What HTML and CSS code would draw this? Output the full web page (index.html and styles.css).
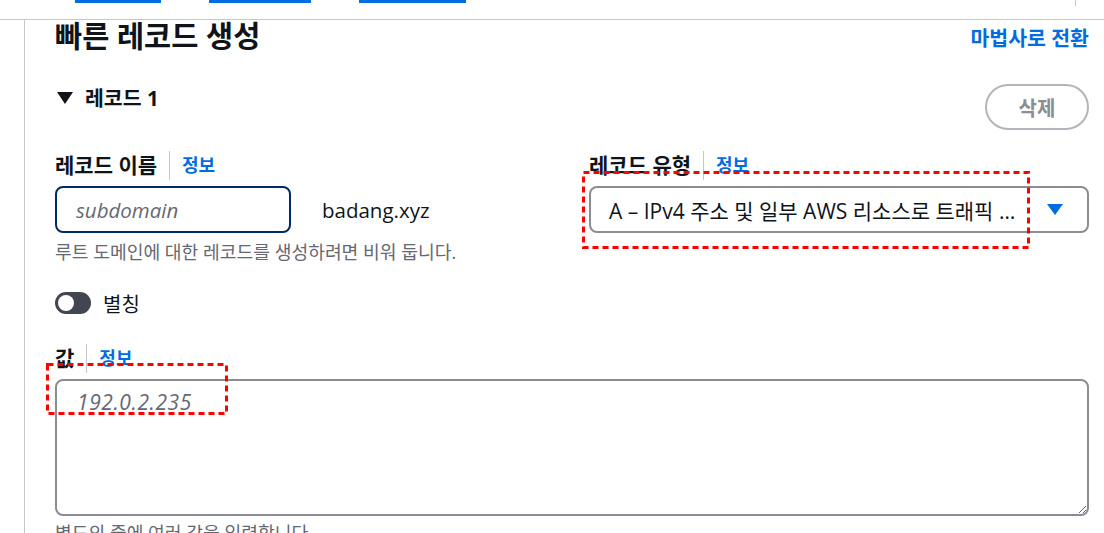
FILE: index.html
```html
<!DOCTYPE html>
<html lang="ko">
<head>
<meta charset="utf-8">
<title>빠른 레코드 생성</title>
<link rel="stylesheet" href="styles.css">
</head>
<body>
<div class="page">
  <div class="topbar">
    <span class="tab tab-1"></span>
    <span class="tab tab-2"></span>
    <span class="tab tab-3"></span>
    <span class="topbar-tick"></span>
  </div>
  <div class="main">
    <div class="rail"></div>
    <div class="content">
      <div class="header">
        <h1 class="title">빠른 레코드 생성</h1>
        <a class="wizard-link" href="#">마법사로 전환</a>
      </div>
      <div class="record-head">
        <div class="record-title"><span class="caret"></span>레코드 1</div>
        <button class="delete-btn" type="button">삭제</button>
      </div>
      <div class="grid">
        <div class="col">
          <div class="label-row"><span class="label">레코드 이름</span><span class="sep"></span><a class="info" href="#">정보</a></div>
          <div class="name-row">
            <input class="name-input" type="text" placeholder="subdomain">
            <span class="domain">badang.xyz</span>
          </div>
          <div class="helper">루트 도메인에 대한 레코드를 생성하려면 비워 둡니다.</div>
        </div>
        <div class="col">
          <div class="label-row"><span class="label">레코드 유형</span><span class="sep"></span><a class="info" href="#">정보</a></div>
          <div class="select">
            <span class="select-text">A – IPv4 주소 및 일부 AWS 리소스로 트래픽 …</span>
            <svg class="select-caret" width="16" height="11" viewBox="0 0 16 11"><path d="M0 0H16L8 11Z" fill="#006ce0"/></svg>
          </div>
        </div>
      </div>
      <div class="toggle-row">
        <span class="toggle"><span class="knob"></span></span>
        <span class="toggle-label">별칭</span>
      </div>
      <div class="label-row value-label"><span class="label">값</span><span class="sep"></span><a class="info" href="#">정보</a></div>
      <textarea class="value-input" placeholder="192.0.2.235"></textarea>
      <div class="helper helper-bottom">별도의 줄에 여러 값을 입력합니다.</div>
    </div>
  </div>
  <svg class="mark mark-type" width="448" height="78" viewBox="0 0 448 78"><rect x="1.5" y="1.5" width="445" height="75" fill="none" stroke="#ff0000" stroke-width="3" stroke-dasharray="6 4"/></svg>
  <svg class="mark mark-value" width="182" height="52" viewBox="0 0 182 52"><rect x="1.5" y="1.5" width="179" height="49" fill="none" stroke="#ff0000" stroke-width="3" stroke-dasharray="6 4"/></svg>
</div>
</body>
</html>
```
FILE: styles.css
```css
* { box-sizing: border-box; }
html, body { margin: 0; padding: 0; background: #ffffff; }
body {
  font-family: "Open Sans", "Noto Sans CJK KR", sans-serif;
  color: #0f141a;
  font-size: 20px;
  overflow: hidden;
}
.page { position: relative; width: 1104px; height: 533px; overflow: hidden; }

.topbar {
  height: 20px;
  border-bottom: 1px solid #c6c6cd;
  display: flex;
  align-items: flex-start;
  padding-left: 75px;
}
.tab { display: block; height: 3px; background: #006ce0; }
.tab-1 { width: 86px; }
.tab-2 { width: 102px; margin-left: 48px; }
.tab-3 { width: 107px; margin-left: 48px; }
.topbar-tick { display: block; width: 1px; height: 6px; background: #c6c6cd; margin-left: 609px; }

.main { display: flex; height: 513px; }
.rail { width: 25px; border-right: 1px solid #c6c6cd; flex: none; }
.content { flex: 1; padding: 0 15px 0 30px; }

.header { display: flex; justify-content: space-between; align-items: center; height: 32px; }
.title { margin: 0; font-size: 29.5px; font-weight: 700; line-height: 32px; }
.wizard-link { color: #006ce0; font-weight: 700; font-size: 20.5px; text-decoration: none; line-height: 32px; margin-top: 4px; }

.record-head { display: flex; justify-content: space-between; align-items: flex-start; margin-top: 32px; }
.record-title { display: flex; align-items: center; font-weight: 700; font-size: 20.5px; line-height: 28px; }
.caret { width: 0; height: 0; border-left: 8px solid transparent; border-right: 8px solid transparent; border-top: 12px solid #0f141a; margin: 0 12px 0 2px; }
.delete-btn {
  width: 104px; height: 46px; border: 2px solid #b4b4bb; border-radius: 23px; background: #fff;
  color: #8c8c94; font-family: inherit; font-size: 20px; font-weight: 700; padding: 0; cursor: default;
}

.grid { display: grid; grid-template-columns: 1fr 1fr; column-gap: 34px; margin-top: 20px; }
.label-row { display: flex; align-items: center; height: 30px; }
.label { font-weight: 700; font-size: 21px; line-height: 30px; }
.sep { width: 1px; height: 29px; background: #c6c6cd; margin: 0 12px; }
.info { color: #006ce0; font-weight: 700; font-size: 18px; text-decoration: none; line-height: 30px; }

.name-row { display: flex; align-items: center; margin-top: 6px; }
.name-input {
  width: 236px; height: 47px; border: 2px solid #002b66; border-radius: 8px; outline: none;
  padding: 0 19px; font-family: inherit; font-size: 20.5px; color: #0f141a;
}
.name-input::placeholder { color: #656871; font-style: italic; }
.domain { margin-left: 31px; font-size: 20.5px; }
.helper { color: #656871; font-size: 18.2px; line-height: 22px; margin-top: 8px; }

.select {
  display: flex; align-items: center; justify-content: space-between;
  height: 47px; margin-top: 6px; border: 2px solid #8c8c94; border-radius: 8px; padding: 0 24px 0 18px;
}
.select-text { font-size: 21px; white-space: nowrap; }
.select-caret { display: block; }

.toggle-row { display: flex; align-items: center; margin-top: 28px; height: 24px; }
.toggle { position: relative; width: 36px; height: 22px; border-radius: 11px; background: #424650; }
.knob { position: absolute; left: 3px; top: 3px; width: 16px; height: 16px; border-radius: 50%; background: #fff; }
.toggle-label { margin-left: 12px; font-size: 20px; }

.value-label { margin-top: 28px; }
.value-input {
  display: block; width: 100%; height: 137px; margin-top: 6px; border: 2px solid #8c8c94; border-radius: 8px;
  padding: 7px 20px; font-family: inherit; font-size: 21px; letter-spacing: 0.6px; outline: none; resize: vertical;
}
.value-input::placeholder { color: #656871; font-style: italic; }
.helper-bottom { margin-top: 6px; }

.mark { position: absolute; display: block; }
.mark-type { left: 582px; top: 171px; }
.mark-value { left: 46px; top: 363px; }
```
